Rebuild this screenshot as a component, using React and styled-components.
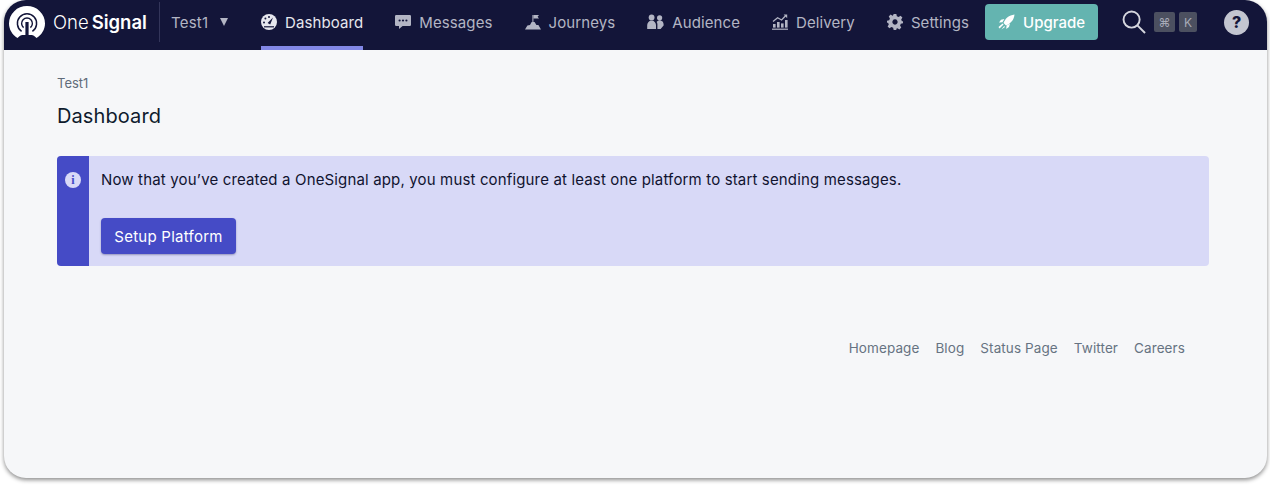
import React from "react";
import styled, { createGlobalStyle } from "styled-components";

const Global = createGlobalStyle`
  html, body {
    margin: 0;
    padding: 0;
    background: #fff;
    font-family: Inter, "Liberation Sans", sans-serif;
  }
`;

const navItems = [
  { label: "Dashboard", icon: "gauge", active: true },
  { label: "Messages", icon: "chat" },
  { label: "Journeys", icon: "flag" },
  { label: "Audience", icon: "people" },
  { label: "Delivery", icon: "chart" },
  { label: "Settings", icon: "gear" },
];

const footerLinks = ["Homepage", "Blog", "Status Page", "Twitter", "Careers"];

function Logo() {
  return (
    <svg width="36" height="33" viewBox="0 0 36 33">
      <path
        d="M8.5 32 C3.4 29 0 23.4 0 17.5 A18 17.5 0 0 1 36 17.5 C36 23.4 32.6 29 27.5 32 C25 29.5 24 29 21 29 H15 C12 29 11 29.5 8.5 32 Z"
        fill="#fff"
      />
      <path d="M12.6 25.4 A9.6 9.6 0 1 1 23.4 25.4" fill="none" stroke="#131539" strokeWidth="1.5" />
      <path d="M14.6 21.6 A5.4 5.4 0 1 1 21.4 21.6" fill="none" stroke="#131539" strokeWidth="1.4" />
      <rect x="16.4" y="16" width="3.2" height="14" fill="#131539" />
    </svg>
  );
}

function NavIcon({ name }) {
  if (name === "gauge") {
    return (
      <svg width="16" height="16" viewBox="0 0 16 16">
        <circle cx="8" cy="8" r="8" fill="currentColor" />
        <path d="M6.6 9 L12 3.6 L9.2 10.6 Z" fill="#131539" />
        <circle cx="3" cy="8.4" r="1" fill="#131539" />
        <circle cx="4.4" cy="4.6" r="1" fill="#131539" />
        <circle cx="8" cy="3" r="1" fill="#131539" />
        <rect x="3" y="12.2" width="10" height="1.2" fill="#131539" />
      </svg>
    );
  }
  if (name === "chat") {
    return (
      <svg width="16" height="16" viewBox="0 0 16 16">
        <path
          d="M1.2 1 H14.8 A1.2 1.2 0 0 1 16 2.2 V10.8 A1.2 1.2 0 0 1 14.8 12 H7.6 L4 15 V12 H1.2 A1.2 1.2 0 0 1 0 10.8 V2.2 A1.2 1.2 0 0 1 1.2 1 Z"
          fill="currentColor"
        />
        <circle cx="4.6" cy="6.5" r="1.1" fill="#131539" />
        <circle cx="8" cy="6.5" r="1.1" fill="#131539" />
        <circle cx="11.4" cy="6.5" r="1.1" fill="#131539" />
      </svg>
    );
  }
  if (name === "flag") {
    return (
      <svg width="16" height="16" viewBox="0 0 16 16">
        <path d="M0 15.5 L2.4 11.4 L5 11 L6.4 8.2 L7.4 8 V1 H8.4 V8 H9.6 L11.4 11 H13.4 L16 15.5 Z" fill="currentColor" />
        <path d="M8.4 1 H14 L12.6 2.8 L14 4.6 H8.4 Z" fill="currentColor" />
      </svg>
    );
  }
  if (name === "people") {
    return (
      <svg width="17" height="16" viewBox="0 0 17 16">
        <circle cx="4.6" cy="3.4" r="2.9" fill="currentColor" />
        <circle cx="12.6" cy="3.8" r="2.6" fill="currentColor" />
        <path d="M0.2 15 V11 A4.4 4.4 0 0 1 9 11 V15 Z" fill="currentColor" />
        <path d="M10.4 15 V10.2 C10.4 9.2 10 8.4 9.6 8 A3.8 3.8 0 0 1 16.6 10 L16.6 11.4 L13.6 15 Z" fill="currentColor" />
      </svg>
    );
  }
  if (name === "chart") {
    return (
      <svg width="16" height="16" viewBox="0 0 16 16">
        <rect x="0" y="14.6" width="16" height="1.2" fill="currentColor" />
        <rect x="1" y="10" width="2.6" height="3.6" fill="currentColor" />
        <rect x="5" y="8" width="2.6" height="5.6" fill="currentColor" />
        <rect x="9" y="9.4" width="2.6" height="4.2" fill="currentColor" />
        <rect x="13" y="6" width="2.6" height="7.6" fill="currentColor" />
        <path d="M1 7.6 L5.6 3.8 L9.6 6 L13.6 1.8" fill="none" stroke="currentColor" strokeWidth="1.3" />
        <path d="M11.6 .6 H15.2 V4.2 Z" fill="currentColor" />
      </svg>
    );
  }
  return (
    <svg width="16" height="16" viewBox="0 0 24 24">
      <path
        fillRule="evenodd"
        fill="currentColor"
        d="M10 0 H14 L14.8 3.3 L17.4 4.4 L20.3 2.6 L23.1 5.4 L21.3 8.3 L22.4 10.9 L24 11 V14 L20.7 14.8 L19.6 17.4 L21.4 20.3 L18.6 23.1 L15.7 21.3 L14 22 V24 H10 L9.2 20.7 L6.6 19.6 L3.7 21.4 L.9 18.6 L2.7 15.7 L1.6 13.1 L0 13 V10 L3.3 9.2 L4.4 6.6 L2.6 3.7 L5.4 .9 L8.3 2.7 L9 2.4 Z M12 8 A4 4 0 1 0 12.01 8 Z"
      />
    </svg>
  );
}

export default function App() {
  return (
    <>
      <Global />
      <Page>
        <Frame>
          <TopBar>
            <Brand>
              <Logo />
              <Wordmark>
                One<b>Signal</b>
              </Wordmark>
            </Brand>
            <AppPicker>
              Test1
              <Caret />
            </AppPicker>
            <Nav>
              {navItems.map((item) => (
                <NavLink key={item.label} $active={item.active}>
                  <NavIcon name={item.icon} />
                  {item.label}
                </NavLink>
              ))}
            </Nav>
            <UpgradeButton>
              <svg width="17" height="16" viewBox="0 0 17 16">
                <path d="M5.5 9 C7 4.6 11 1.2 16.5 .5 C16 6 12.6 9.6 8 11.4 Z" fill="#fff" />
                <path d="M6.4 5 L3 5.8 L1 8.6 L4.4 8.2 Z M12 9.6 L11 13 L8.2 15 L8.6 11.6 Z" fill="#fff" />
                <path d="M.5 13 L4.6 9.6 L5.6 10.6 L1.5 14.6 Z M3.4 15.5 L6.2 12 L7 13 Z" fill="#fff" />
              </svg>
              Upgrade
            </UpgradeButton>
            <SearchGroup>
              <svg width="24" height="24" viewBox="0 0 25 25">
                <circle cx="10" cy="10" r="8.4" fill="none" stroke="#d5d6de" strokeWidth="2" />
                <path d="M16 16 L24 24" stroke="#d5d6de" strokeWidth="2" />
              </svg>
              <KeyCap $wide>⌘</KeyCap>
              <KeyCap>K</KeyCap>
            </SearchGroup>
            <HelpButton>?</HelpButton>
          </TopBar>
          <Content>
            <Crumb>Test1</Crumb>
            <Title>Dashboard</Title>
            <Banner>
              <BannerSide>
                <InfoDot>i</InfoDot>
              </BannerSide>
              <BannerBody>
                <BannerText>
                  Now that you’ve created a OneSignal app, you must configure at least one platform to start sending messages.
                </BannerText>
                <SetupButton>Setup Platform</SetupButton>
              </BannerBody>
            </Banner>
            <Footer>
              {footerLinks.map((link) => (
                <FooterLink key={link}>{link}</FooterLink>
              ))}
            </Footer>
          </Content>
        </Frame>
      </Page>
    </>
  );
}

const Page = styled.div`
  width: 1270px;
  height: 486px;
  padding: 0 3px 8px 4px;
  box-sizing: border-box;
  overflow: hidden;
`;
const Frame = styled.div`
  height: 100%;
  display: flex;
  flex-direction: column;
  background: #f6f7f9;
  border-radius: 22px;
  box-shadow: 0 2px 4px rgba(0, 0, 0, 0.45);
  overflow: hidden;
`;
const TopBar = styled.header`
  height: 50px;
  flex: none;
  display: flex;
  align-items: center;
  background: #131539;
  color: #b3b5c4;
  > * {
    margin-bottom: 6px;
  }
`;
const Brand = styled.div`
  width: 156px;
  height: 40px;
  flex: none;
  display: flex;
  align-items: center;
  gap: 8px;
  padding-left: 5px;
  box-sizing: border-box;
  border-right: 1px solid #33355a;
`;
const Wordmark = styled.span`
  color: #fff;
  font-size: 18.5px;
  font-weight: 300;
  b {
    font-weight: 600;
    margin-left: 3px;
  }
`;
const AppPicker = styled.div`
  width: 101px;
  flex: none;
  display: flex;
  align-items: center;
  gap: 12px;
  padding-left: 11px;
  box-sizing: border-box;
  font-size: 15px;
  letter-spacing: 0.2px;
`;
const Caret = styled.span`
  width: 0;
  height: 0;
  border-left: 4.5px solid transparent;
  border-right: 4.5px solid transparent;
  border-top: 8px solid #b3b5c4;
`;
const Nav = styled.nav`
  display: flex;
  gap: 32px;
  align-self: stretch;
  flex: none;
  && {
    margin-bottom: 0;
  }
`;
const NavLink = styled.a`
  flex: none;
  display: flex;
  align-items: center;
  gap: 8px;
  font-size: 15px;
  letter-spacing: 0.1px;
  white-space: nowrap;
  box-sizing: border-box;
  border-bottom: 4px solid ${(p) => (p.$active ? "#8287e6" : "transparent")};
  padding-bottom: 2px;
  color: ${(p) => (p.$active ? "#e6e7ee" : "#b3b5c4")};
  svg {
    flex: none;
  }
`;
const UpgradeButton = styled.button`
  width: 113px;
  height: 36px;
  margin-left: 16px;
  flex: none;
  display: flex;
  align-items: center;
  justify-content: center;
  gap: 8px;
  border: 0;
  border-radius: 4px;
  background: #64b4b0;
  color: #fff;
  font: 500 15px Inter, sans-serif;
`;
const SearchGroup = styled.div`
  display: flex;
  align-items: center;
  gap: 4px;
  margin-left: 24px;
  svg {
    margin-right: 4px;
  }
`;
const KeyCap = styled.span`
  width: ${(p) => (p.$wide ? 21 : 18)}px;
  height: 20px;
  display: flex;
  align-items: center;
  justify-content: center;
  border-radius: 2px;
  background: #4c5060;
  color: #a8abb8;
  font-size: 12px;
`;
const HelpButton = styled.span`
  width: 25px;
  height: 25px;
  margin-left: 27px;
  display: flex;
  align-items: center;
  justify-content: center;
  border-radius: 50%;
  background: #c3c5d0;
  color: #131539;
  font-size: 16px;
  font-weight: 800;
`;
const Content = styled.main`
  flex: 1;
  padding: 26px 58px 0 53px;
`;
const Crumb = styled.div`
  font-size: 13px;
  line-height: 15px;
  color: #5f6b7a;
`;
const Title = styled.h1`
  margin: 12px 0 0;
  font-size: 20px;
  letter-spacing: 0.1px;
  line-height: 27px;
  font-weight: 400;
  color: #0f1b2d;
`;
const Banner = styled.section`
  display: flex;
  height: 110px;
  margin-top: 26px;
  border-radius: 4px;
  overflow: hidden;
  background: #d8d9f7;
`;
const BannerSide = styled.div`
  width: 32px;
  flex: none;
  display: flex;
  justify-content: center;
  padding-top: 16px;
  box-sizing: border-box;
  background: #454bc6;
`;
const InfoDot = styled.span`
  width: 16px;
  height: 16px;
  display: flex;
  align-items: center;
  justify-content: center;
  border-radius: 50%;
  background: #d8d9f7;
  color: #454bc6;
  font: 700 12px "Liberation Serif", serif;
`;
const BannerBody = styled.div`
  padding: 14px 12px;
`;
const BannerText = styled.p`
  margin: 0;
  font-size: 15px;
  letter-spacing: 0.15px;
  line-height: 20px;
  color: #10132f;
`;
const SetupButton = styled.button`
  display: block;
  width: 135px;
  height: 36px;
  margin-top: 28px;
  border: 0;
  border-radius: 4px;
  background: #454bc6;
  box-shadow: 0 1px 2px rgba(20, 20, 80, 0.35);
  color: #fff;
  font: 400 15px Inter, sans-serif;
  letter-spacing: 0.25px;
`;
const Footer = styled.footer`
  display: flex;
  justify-content: flex-end;
  gap: 16px;
  margin-top: 74px;
  padding-right: 24px;
`;
const FooterLink = styled.a`
  font-size: 13.5px;
  letter-spacing: 0.1px;
  line-height: 16px;
  color: #667382;
`;
